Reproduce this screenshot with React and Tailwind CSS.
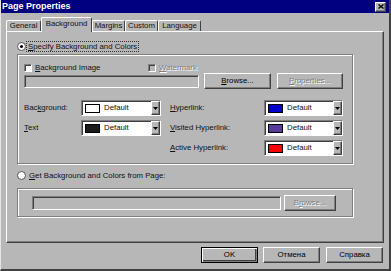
import React from "react";

const RAISED =
  "border border-t-white border-l-white border-r-[#404040] border-b-[#404040] shadow-[inset_-1px_-1px_0_#7e7e7e]";
const SUNKEN =
  "border border-t-[#7e7e7e] border-l-[#7e7e7e] border-r-white border-b-white shadow-[inset_1px_1px_0_#404040]";
const ETCHED = "border border-[#7e7e7e] shadow-[1px_1px_0_#fff,inset_1px_1px_0_#fff]";
const DISABLED = "text-[#808080] [text-shadow:1px_1px_0_#ffffff]";

function Radio({ checked }) {
  return (
    <svg width="9" height="9" viewBox="0 0 9 9" className="shrink-0">
      <circle cx="4.5" cy="4.5" r="4" fill="#fff" stroke="#555" strokeWidth="1" />
      {checked && <circle cx="4.5" cy="4.5" r="1.6" fill="#000" />}
    </svg>
  );
}

function Check({ disabled }) {
  return (
    <div
      className={`w-[8px] h-[8px] shrink-0 ${SUNKEN} ${disabled ? "bg-[#b7b7b7]" : "bg-white"}`}
    />
  );
}

function Btn({ children, w, disabled, isDefault }) {
  return (
    <div
      className={`h-[16px] shrink-0 flex items-center justify-center ${
        isDefault
          ? "border border-black shadow-[inset_1px_1px_0_#fff,inset_-1px_-1px_0_#7e7e7e,inset_-2px_-2px_0_#404040]"
          : RAISED
      } ${disabled ? DISABLED : "text-black"}`}
      style={{ width: w }}
    >
      {children}
    </div>
  );
}

function Combo({ color, w }) {
  return (
    <div className={`h-[16px] shrink-0 bg-white flex items-center ${SUNKEN}`} style={{ width: w }}>
      <div className="ml-[3px] w-[15px] h-[9px] border border-black" style={{ background: color }} />
      <span className="ml-[4px] flex-1">Default</span>
      <div className={`w-[9px] h-[14px] bg-[#b7b7b7] flex items-center justify-center ${RAISED}`}>
        <svg width="5" height="3" viewBox="0 0 5 3">
          <path d="M0 0H5L2.5 3Z" fill="#000" />
        </svg>
      </div>
    </div>
  );
}

function Tab({ children, w, selected }) {
  return (
    <div
      className={`flex items-center justify-center bg-[#b7b7b7] border-t border-l border-t-white border-l-white border-r border-r-[#404040] rounded-t-[2px] ${
        selected ? "h-[15px] relative z-10 -mb-[1px] pb-[2px]" : "h-[11px]"
      }`}
      style={{ width: w }}
    >
      {children}
    </div>
  );
}

export default function App() {
  return (
    <div
      className="w-[391px] h-[271px] bg-[#b7b7b7] flex flex-col border-l border-l-[#e4e4e4] border-r-2 border-r-[#404040] border-b-2 border-b-[#404040] text-[7.8px] leading-none text-[#111]"
      style={{ fontFamily: '"Liberation Sans", Arial, sans-serif' }}
    >
      {/* Title bar */}
      <div className="h-[13px] bg-[#000080] flex items-center justify-between pl-[1px] pr-[3px]">
        <span className="text-white font-bold text-[9px]">Page Properties</span>
        <div className={`w-[11px] h-[10px] bg-[#b7b7b7] flex items-center justify-center ${RAISED}`}>
          <svg width="6" height="5" viewBox="0 0 6 5">
            <path d="M0.5 0.5L5.5 4.5M5.5 0.5L0.5 4.5" stroke="#000" strokeWidth="1.4" />
          </svg>
        </div>
      </div>

      {/* Tabs */}
      <div className="mt-[4px] ml-[5px] flex items-end h-[14px]">
        <Tab w={35}>General</Tab>
        <Tab w={51} selected>
          Background
        </Tab>
        <Tab w={33}>Margins</Tab>
        <Tab w={33}>Custom</Tab>
        <Tab w={43}>Language</Tab>
      </div>

      {/* Panel */}
      <div className="ml-[5px] w-[378px] h-[212px] border-t border-l border-t-white border-l-white border-r border-b border-r-[#404040] border-b-[#404040] shadow-[inset_-1px_-1px_0_#7e7e7e] flex flex-col">
        {/* Radio 1 */}
        <div className="mt-[9px] ml-[10px] h-[11px] flex items-center">
          <Radio checked />
          <span className="ml-[1px] px-[1px] py-[1px] outline outline-1 outline-dotted outline-[#333]">
            <u>S</u>pecify Background and Colors
          </span>
        </div>

        {/* Group 1 */}
        <div className={`mt-[2px] ml-[10px] w-[336px] h-[110px] flex flex-col ${ETCHED}`}>
          <div className="mt-[8px] ml-[6px] h-[9px] flex items-center">
            <div className="w-[124px] flex items-center">
              <Check />
              <span className="ml-[3px]">
                <u>B</u>ackground Image
              </span>
            </div>
            <Check disabled />
            <span className={`ml-[3px] ${DISABLED}`}>
              <u>W</u>atermark
            </span>
          </div>

          <div className="mt-[1px] ml-[6px] h-[16px] flex items-center">
            <div className={`w-[175px] h-[13px] ${SUNKEN}`} />
            <div className="ml-[5px]">
              <Btn w={67}>
                <u>B</u>rowse...
              </Btn>
            </div>
            <div className="ml-[6px]">
              <Btn w={66} disabled>
                <u>P</u>roperties...
              </Btn>
            </div>
          </div>

          <div className="mt-[11px] ml-[6px] flex flex-col gap-[4px]">
            <div className="flex items-center">
              <span className="w-[57px]">
                Bac<u>k</u>ground:
              </span>
              <Combo color="#ffffff" w={80} />
              <span className="ml-[9px] w-[94px]">
                <u>H</u>yperlink:
              </span>
              <Combo color="#0000cc" w={79} />
            </div>
            <div className="flex items-center">
              <span className="w-[57px]">
                <u>T</u>ext
              </span>
              <Combo color="#1a1a1a" w={80} />
              <span className="ml-[9px] w-[94px]">
                <u>V</u>isited Hyperlink:
              </span>
              <Combo color="#553c96" w={79} />
            </div>
            <div className="flex items-center">
              <span className="w-[137px]" />
              <span className="ml-[9px] w-[94px]">
                <u>A</u>ctive Hyperlink:
              </span>
              <Combo color="#ff0000" w={79} />
            </div>
          </div>
        </div>

        {/* Radio 2 */}
        <div className="mt-[6px] ml-[10px] h-[11px] flex items-center">
          <Radio />
          <span className="ml-[2px] px-[1px]">
            <u>G</u>et Background and Colors from Page:
          </span>
        </div>

        {/* Group 2 */}
        <div className={`mt-[7px] ml-[10px] w-[336px] h-[29px] flex items-center ${ETCHED}`}>
          <div className={`ml-[14px] w-[249px] h-[14px] ${SUNKEN}`} />
          <div className="ml-[3px]">
            <Btn w={52} disabled>
              B<u>r</u>owse...
            </Btn>
          </div>
        </div>
      </div>

      {/* Bottom buttons */}
      <div className="mt-[4px] flex justify-end pr-[6px] gap-[5px]">
        <Btn w={57} isDefault>
          OK
        </Btn>
        <Btn w={57}>Отмена</Btn>
        <div className="ml-[1px]">
          <Btn w={57}>Справка</Btn>
        </div>
      </div>
    </div>
  );
}
